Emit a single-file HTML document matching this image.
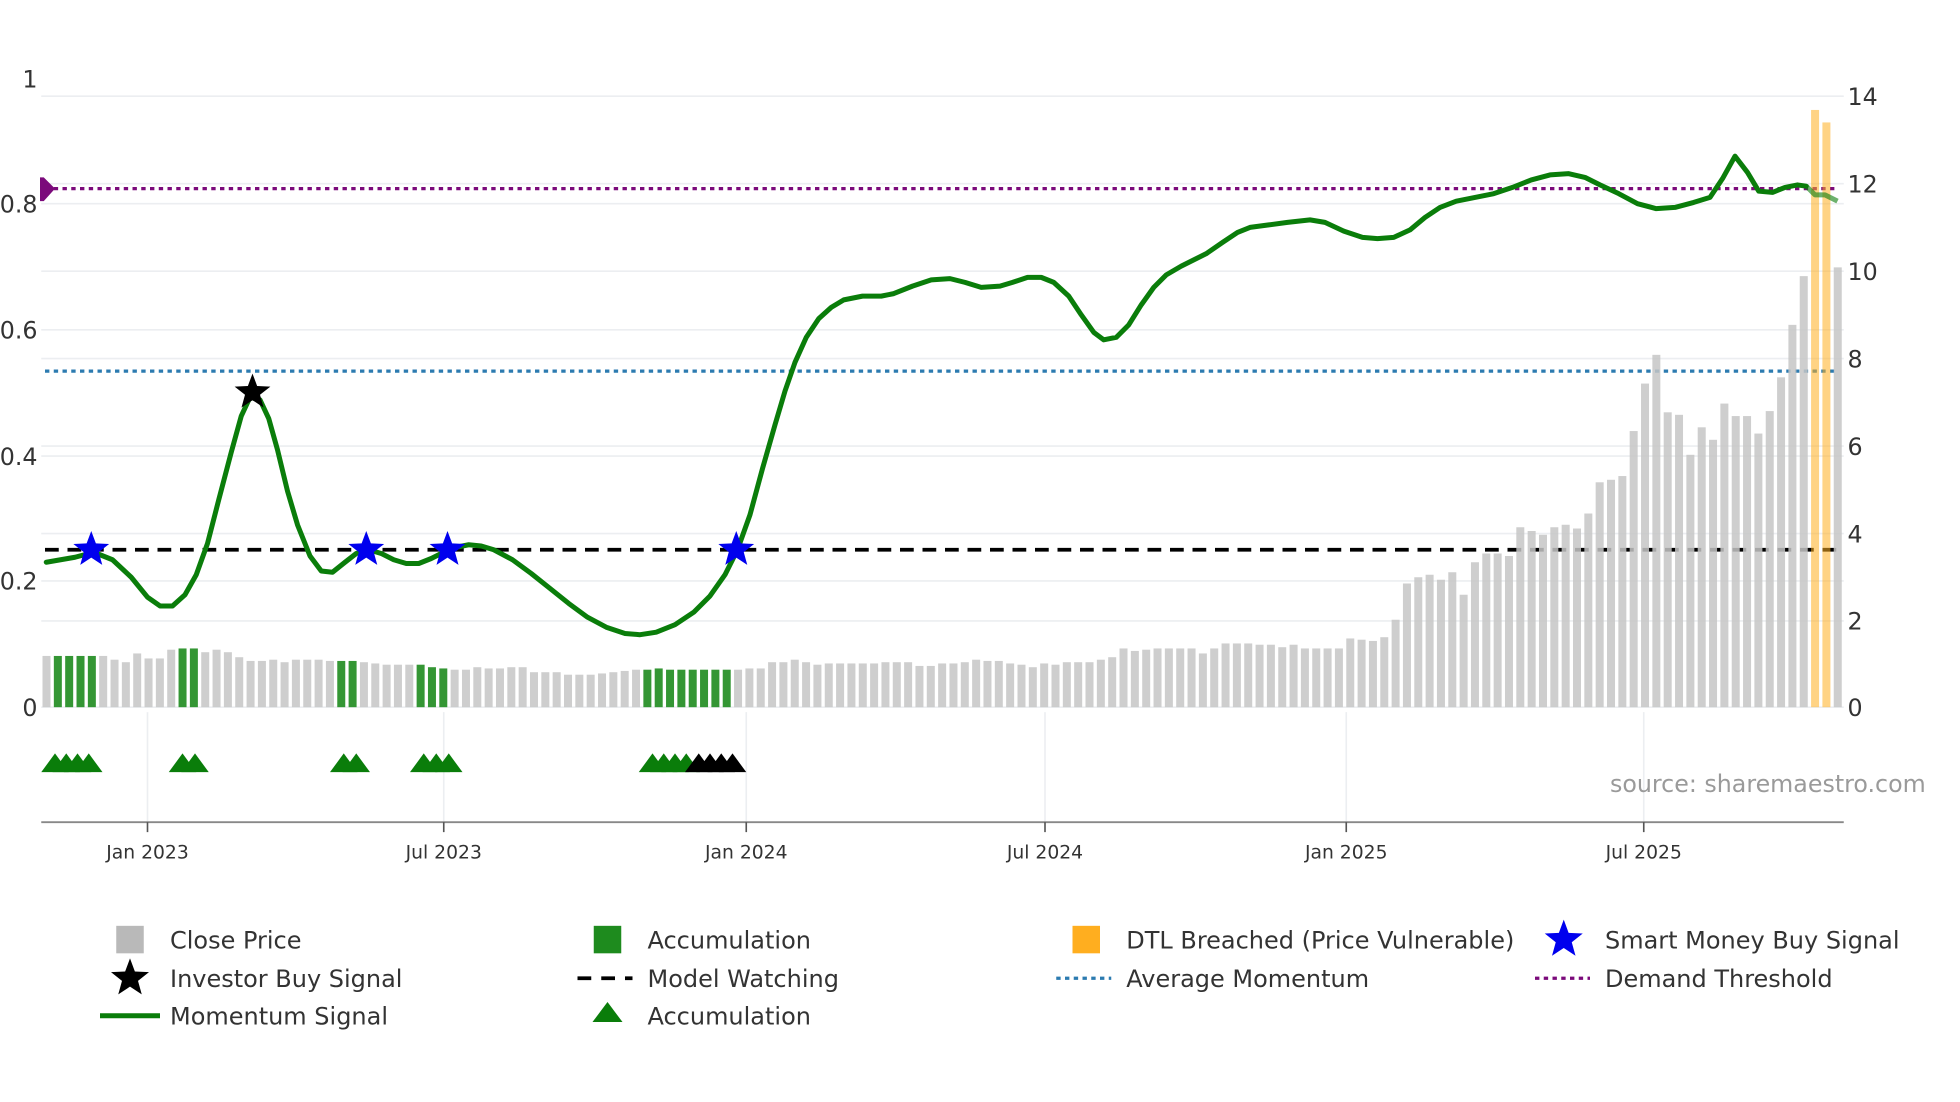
<!DOCTYPE html>
<html><head><meta charset="utf-8"><style>
html,body{margin:0;padding:0;background:#fff;}
svg{display:block}
text{font-family:"DejaVu Sans","Liberation Sans",sans-serif;fill:#333}
</style></head><body>
<svg id="s" width="1960" height="1102" viewBox="0 0 1568 882" preserveAspectRatio="none" xmlns="http://www.w3.org/2000/svg">
<g stroke="#eceef1" stroke-width="1.3">
<line x1="33" x2="1475" y1="77" y2="77"/><line x1="33" x2="1475" y1="147" y2="147"/><line x1="33" x2="1475" y1="217" y2="217"/><line x1="33" x2="1475" y1="287" y2="287"/><line x1="33" x2="1475" y1="357" y2="357"/><line x1="33" x2="1475" y1="427" y2="427"/><line x1="33" x2="1475" y1="497" y2="497"/>
<line x1="33" x2="1475" y1="163" y2="163"/><line x1="33" x2="1475" y1="264" y2="264"/><line x1="33" x2="1475" y1="365" y2="365"/><line x1="33" x2="1475" y1="465" y2="465"/><line x1="33" x2="1475" y1="566" y2="566"/>
<line x1="118" x2="118" y1="570" y2="658"/><line x1="355" x2="355" y1="570" y2="658"/><line x1="597" x2="597" y1="570" y2="658"/><line x1="836" x2="836" y1="570" y2="658"/><line x1="1077" x2="1077" y1="570" y2="658"/><line x1="1315" x2="1315" y1="570" y2="658"/>
</g>
<line x1="36" x2="1470" y1="151" y2="151" stroke="#7b0a7b" stroke-width="2.6" stroke-dasharray="3.5,3.5"/>
<path d="M32,142 L35,142 L44,151 L35,161 L32,161 Z" fill="#7b0a7b"/>
<line x1="36" x2="1470" y1="297" y2="297" stroke="#2c7bb0" stroke-width="2.6" stroke-dasharray="3.5,3.5"/>
<line x1="36" x2="1470" y1="440" y2="440" stroke="#000" stroke-width="3" stroke-dasharray="11,7"/>
<g id="bars"></g>
<polyline fill="none" stroke="#0a7d0a" stroke-width="4" stroke-linejoin="round" stroke-linecap="round" points="37,450 60,446 75,442 90,448 105,462 118,478 128,485 138,485 148,476 157,460 166,435 175,400 185,362 193,333 200,318 208,320 215,335 222,360 230,393 238,420 248,445 257,457 266,458 276,450 285,443 295,440 305,443 315,448 325,451 335,451 345,447 355,442 365,438 375,436 385,437 395,440 410,448 425,459 440,471 455,483 470,494 485,502 500,507 512,508 525,506 540,500 555,490 568,477 580,460 590,440 600,412 610,375 620,340 628,313 636,290 645,270 655,255 665,246 675,240 690,237 705,237 715,235 730,229 745,224 760,223 772,226 785,230 800,229 810,226 822,222 833,222 843,226 855,237 865,252 875,266 883,272 893,270 903,260 913,244 923,230 933,220 945,213 955,208 965,203 978,194 990,186 1000,182 1015,180 1030,178 1048,176 1060,178 1075,185 1090,190 1102,191 1115,190 1128,184 1140,174 1152,166 1165,161 1180,158 1195,155 1210,150 1225,144 1240,140 1255,139 1268,142 1280,148 1295,155 1310,163 1325,167 1340,166 1355,162 1368,158 1378,143 1388,125 1398,138 1407,153 1418,154 1428,150 1438,148 1445,149"/>
<g id="obars"></g>
<polyline fill="none" stroke="#0a7d0a" stroke-width="4" stroke-linejoin="round" points="1445,149 1452,156 1460,156 1470,161" opacity="0.6"/>
<g id="stars"></g>
<g id="tris"></g>
<line x1="33" x2="1475" y1="658" y2="658" stroke="#888" stroke-width="1.5"/>
<g stroke="#555" stroke-width="1.3"><line x1="118" x2="118" y1="658" y2="666"/><line x1="355" x2="355" y1="658" y2="666"/><line x1="597" x2="597" y1="658" y2="666"/><line x1="836" x2="836" y1="658" y2="666"/><line x1="1077" x2="1077" y1="658" y2="666"/><line x1="1315" x2="1315" y1="658" y2="666"/></g>
<g font-size="15" text-anchor="middle">
<text x="118" y="687">Jan 2023</text><text x="355" y="687">Jul 2023</text><text x="597" y="687">Jan 2024</text><text x="836" y="687">Jul 2024</text><text x="1077" y="687">Jan 2025</text><text x="1315" y="687">Jul 2025</text></g>
<g font-size="19" text-anchor="end">
<text x="30" y="70">1</text><text x="30" y="170">0.8</text><text x="30" y="271">0.6</text><text x="30" y="372">0.4</text><text x="30" y="472">0.2</text><text x="30" y="573">0</text></g>
<g font-size="19">
<text x="1478" y="84">14</text><text x="1478" y="154">12</text><text x="1478" y="224">10</text><text x="1478" y="294">8</text><text x="1478" y="364">6</text><text x="1478" y="434">4</text><text x="1478" y="504">2</text><text x="1478" y="573">0</text></g>
<text x="1288" y="634" font-size="19" style="fill:#9a9a9a">source: sharemaestro.com</text>
<g font-size="19.2">
<rect x="93" y="741" width="22" height="22" fill="#b9b9b9"/><text x="136" y="759">Close Price</text>
<text x="136" y="790">Investor Buy Signal</text>
<line x1="80" x2="128" y1="813" y2="813" stroke="#0a7d0a" stroke-width="4"/><text x="136" y="820">Momentum Signal</text>
<rect x="475" y="741" width="22" height="22" fill="#1e8b1e"/><text x="518" y="759">Accumulation</text>
<line x1="462" x2="506" y1="783" y2="783" stroke="#000" stroke-width="3" stroke-dasharray="11,8"/><text x="518" y="790">Model Watching</text>
<path d="M474,818 L486,802 L498,818 Z" fill="#0a7d0a"/><text x="518" y="820">Accumulation</text>
<rect x="858" y="741" width="22" height="22" fill="#ffae1f"/><text x="901" y="759">DTL Breached (Price Vulnerable)</text>
<line x1="845" x2="889" y1="783" y2="783" stroke="#2c7bb0" stroke-width="2.6" stroke-dasharray="3.5,3.5"/><text x="901" y="790">Average Momentum</text>
<text x="1284" y="759">Smart Money Buy Signal</text>
<line x1="1228" x2="1272" y1="783" y2="783" stroke="#7b0a7b" stroke-width="2.6" stroke-dasharray="3.5,3.5"/><text x="1284" y="790">Demand Threshold</text>
</g>
<g id="lstars"></g>
</svg>
<script>
var NS="http://www.w3.org/2000/svg";
function el(p,t,a){var e=document.createElementNS(NS,t);for(var k in a)e.setAttribute(k,a[k]);document.getElementById(p).appendChild(e);return e;}
var tops=[525,525,525,525,525,525,528,530,523,527,527,520,519,519,522,520,522,526,529,529,528,530,528,528,528,529,529,529,530,531,532,532,532,532,534,535,536,536,534,535,535,534,534,538,538,538,540,540,540,539,538,537,536,536,535,536,536,536,536,536,536,536,535,535,530,530,528,530,532,531,531,531,531,531,530,530,530,533,533,531,531,530,528,529,529,531,532,534,531,532,530,530,530,528,526,519,521,520,519,519,519,519,523,519,515,515,515,516,516,518,516,519,519,519,519,511,512,513,510,496,467,462,460,464,458,476,450,443,443,445,422,425,428,422,420,423,411,386,384,381,345,307,284,330,332,364,342,352,323,333,333,347,329,302,260,221,88,98,214];
var green={1:1,2:1,3:1,4:1,12:1,13:1,26:1,27:1,33:1,34:1,35:1,53:1,54:1,55:1,56:1,57:1,58:1,59:1,60:1};
var n=tops.length, x0=34, x1=1467, dx=(x1-x0)/(n-1);
for(var i=0;i<n;i++){var x=x0+i*dx;var c="#c6c6c6",op=0.85,g="bars";
if(green[i]){c="#1e8b1e";op=0.9;}
if(i==n-3||i==n-2){c="#ffae1f";op=0.55;g="obars";}
el(g,"rect",{x:x,y:tops[i],width:6.4,height:566-tops[i],fill:c,opacity:op});}
function star(g,cx,cy,r,f){var p=[];for(var k=0;k<10;k++){var a=-Math.PI/2+k*Math.PI/5;var rr=k%2?r*0.42:r;p.push((cx+rr*Math.cos(a)).toFixed(1)+","+(cy+rr*Math.sin(a)).toFixed(1));}el(g,"polygon",{points:p.join(" "),fill:f});}
[[73,440],[293,440],[358,440],[589,440]].forEach(function(q){star("stars",q[0],q[1],15,"#0000ee");});
star("stars",202,314,15,"#000");
star("lstars",104,783,16,"#000");star("lstars",1251,752,16,"#0000ee");
function tri(cx,f){el("tris","path",{d:"M"+(cx-11)+",618 L"+cx+",603 L"+(cx+11)+",618 Z",fill:f});}
[44,53,62,71,146,156,275,285,339,349,359,522,531,540,549].forEach(function(c){tri(c,"#0a7d0a");});
[559,568,577,586].forEach(function(c){tri(c,"#000");});
</script>
</body></html>
